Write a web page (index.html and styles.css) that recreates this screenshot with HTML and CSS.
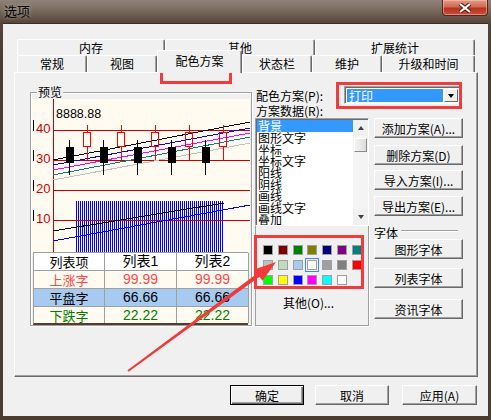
FILE: index.html
```html
<!DOCTYPE html>
<html lang="zh">
<head>
<meta charset="utf-8">
<title>选项</title>
<link rel="stylesheet" href="styles.css">
</head>
<body>
<div class="window">
  <div class="titlebar">
    <span class="title">选项</span>
    <div class="close">
      <svg width="14" height="10" viewBox="0 0 14 10"><path d="M2 1 L12 9 M12 1 L2 9" stroke="#4a1a10" stroke-width="4"/><path d="M2 1 L12 9 M12 1 L2 9" stroke="#fff" stroke-width="2.2"/></svg>
    </div>
  </div>
  <div class="client">
    <div class="tabstrip">
      <div class="tabrow back">
        <div class="tab w148">内存</div>
        <div class="tab w150">其他</div>
        <div class="tab w160">扩展统计</div>
      </div>
      <div class="tabrow front">
        <div class="tab w70">常规</div>
        <div class="tab w70">视图</div>
        <div class="tab w85 sel">配色方案</div>
        <div class="tab w70">状态栏</div>
        <div class="tab w70">维护</div>
        <div class="tab w93">升级和时间</div>
      </div>
    </div>
    <div class="panel">
      <div class="group preview">
        <span class="glabel">预览</span>
        <svg class="chart" width="218" height="153" viewBox="0 0 218 153" shape-rendering="crispEdges">
          <defs>
            <pattern id="vs" width="2" height="10" patternUnits="userSpaceOnUse"><rect width="1" height="10" fill="#0000ff"/></pattern>
          </defs>
          <rect width="218" height="153" fill="#fffbf0"/>
          <rect x="43" y="102" width="149" height="51" fill="url(#vs)"/>
          <g stroke="#c80000" stroke-width="1">
            <line x1="21" y1="31.5" x2="218" y2="31.5"/>
            <line x1="21" y1="61.5" x2="218" y2="61.5"/>
            <line x1="21" y1="91.5" x2="218" y2="91.5"/>
            <line x1="21" y1="121.5" x2="218" y2="121.5"/>
            <line x1="21.5" y1="0" x2="21.5" y2="153"/>
          </g>
          <g stroke="#000" stroke-width="1">
            <line x1="1.5" y1="21" x2="1.5" y2="32"/>
            <line x1="1.5" y1="51" x2="1.5" y2="62"/>
            <line x1="1.5" y1="81" x2="1.5" y2="92"/>
            <line x1="1.5" y1="111" x2="1.5" y2="122"/>
          </g>
          <g class="axis" fill="#d00000">
            <text x="4" y="34">40</text>
            <text x="4" y="64">30</text>
            <text x="4" y="94">20</text>
            <text x="4" y="124">10</text>
          </g>
          <text class="price" x="24" y="19">8888.88</text>
          <g stroke-width="1" fill="none">
            <line x1="21" y1="81" x2="218" y2="44" stroke="#c0c0c0"/>
            <line x1="21" y1="76" x2="218" y2="38" stroke="#008080"/>
            <line x1="21" y1="71" x2="218" y2="34" stroke="#ff00ff"/>
            <line x1="21" y1="66" x2="218" y2="29" stroke="#0000ff"/>
            <line x1="21" y1="61" x2="218" y2="23" stroke="#000"/>
            <line x1="21" y1="142" x2="218" y2="106" stroke="#0000ff"/>
            <line x1="21" y1="132" x2="192" y2="104" stroke="#000"/>
          </g>
          <g fill="#000" stroke="#000">
            <line x1="37.5" y1="41" x2="37.5" y2="76"/><rect x="34" y="48" width="7" height="15"/>
            <line x1="71.5" y1="41" x2="71.5" y2="76"/><rect x="68" y="48" width="7" height="15"/>
            <line x1="105.5" y1="41" x2="105.5" y2="76"/><rect x="102" y="48" width="7" height="15"/>
            <line x1="139.5" y1="41" x2="139.5" y2="76"/><rect x="136" y="48" width="7" height="15"/>
            <line x1="173.5" y1="41" x2="173.5" y2="76"/><rect x="170" y="48" width="7" height="15"/>
          </g>
          <g fill="none" stroke="#ff0000">
            <line x1="55.5" y1="26" x2="55.5" y2="33"/><line x1="55.5" y1="48" x2="55.5" y2="61"/><rect x="51.5" y="33.5" width="7" height="14"/>
            <line x1="89.5" y1="26" x2="89.5" y2="33"/><line x1="89.5" y1="48" x2="89.5" y2="61"/><rect x="85.5" y="33.5" width="7" height="14"/>
            <line x1="123.5" y1="26" x2="123.5" y2="33"/><line x1="123.5" y1="48" x2="123.5" y2="61"/><rect x="119.5" y="33.5" width="7" height="14"/>
            <line x1="157.5" y1="26" x2="157.5" y2="33"/><line x1="157.5" y1="48" x2="157.5" y2="61"/><rect x="153.5" y="33.5" width="7" height="14"/>
            <line x1="191.5" y1="26" x2="191.5" y2="33"/><line x1="191.5" y1="48" x2="191.5" y2="61"/><rect x="187.5" y="33.5" width="7" height="14"/>
          </g>
        </svg>
        <div class="table">
          <div class="cell head">列表项</div><div class="cell head num">列表1</div><div class="cell head num">列表2</div>
          <div class="cell up">上涨字</div><div class="cell up num">99.99</div><div class="cell up num">99.99</div>
          <div class="cell flat">平盘字</div><div class="cell flat num">66.66</div><div class="cell flat num">66.66</div>
          <div class="cell down">下跌字</div><div class="cell down num">22.22</div><div class="cell down num">22.22</div>
        </div>
      </div>
      <div class="right">
        <div class="schemerow">
          <span class="lbl-scheme">配色方案(P):</span>
          <div class="combo">
            <div class="combo-sel">打印</div>
            <div class="combo-btn"><span class="tri"></span></div>
          </div>
        </div>
        <div class="lbl-data">方案数据(R):</div>
        <div class="rgrid">
          <div class="colA">
            <div class="listbox">
              <div class="items">
                <div class="item selitem">背景</div>
                <div class="item">图形文字</div>
                <div class="item">坐标</div>
                <div class="item">坐标文字</div>
                <div class="item">阳线</div>
                <div class="item">阴线</div>
                <div class="item">画线</div>
                <div class="item">画线文字</div>
                <div class="item">叠加</div>
              </div>
              <div class="vscroll">
                <div class="sbtn"><span class="tri-up"></span></div>
                <div class="track"><div class="thumb"></div></div>
                <div class="sbtn"><span class="tri-down"></span></div>
              </div>
            </div>
            <div class="palette">
              <div class="swatches">
                <span class="sw c1"></span><span class="sw c2"></span><span class="sw c3"></span><span class="sw c4"></span><span class="sw c5"></span><span class="sw c6"></span><span class="sw c7"></span>
                <span class="sw c8"></span><span class="sw c9"></span><span class="sw c10"></span><span class="sw c11 focus"></span><span class="sw c12"></span><span class="sw c13"></span><span class="sw c14"></span>
                <span class="sw c15"></span><span class="sw c16"></span><span class="sw c17"></span><span class="sw c18"></span><span class="sw c19"></span><span class="sw c20"></span>
              </div>
              <div class="other">其他(O)...</div>
            </div>
          </div>
          <div class="colB">
            <div class="btn b-add">添加方案(A)...</div>
            <div class="btn b-del">删除方案(D)</div>
            <div class="btn b-imp">导入方案(I)...</div>
            <div class="btn b-exp">导出方案(E)...</div>
            <div class="fontlbl"><span>字体</span><span class="etch"></span></div>
            <div class="btn b-f1">图形字体</div>
            <div class="btn b-f2">列表字体</div>
            <div class="btn b-f3">资讯字体</div>
          </div>
        </div>
      </div>
    </div>
    <div class="dlgbtns">
      <div class="btn dbtn default">确定</div>
      <div class="btn dbtn cancel">取消</div>
      <div class="btn dbtn apply">应用(A)</div>
    </div>
  </div>
  <div class="hl hl-tab"></div>
  <div class="hl hl-combo"></div>
  <div class="hl hl-pal"></div>
  <svg class="arrow" width="491" height="420" viewBox="0 0 491 420">
    <polygon points="276,262 262.5,280.7 259.5,276.7 128.6,371.8 127.4,370.2 257.1,273.4 254.2,269.4" fill="#f03a3a"/>
  </svg>
</div>
</body>
</html>
```

FILE: styles.css
```css
html, body {
  margin: 0;
  padding: 0;
}
body {
  width: 491px;
  height: 420px;
  overflow: hidden;
  font-family: "Noto Sans CJK SC", "Liberation Sans", sans-serif;
  font-size: 12px;
  color: #000;
}
.window {
  position: relative;
  width: 491px;
  height: 420px;
  background: linear-gradient(to bottom, #8f8379 0px, #7a6b5f 10px, #54443a 23px, #4a3c31 60px, #4a3c31 100%);
}
.titlebar {
  height: 23px;
  display: flex;
  align-items: flex-start;
}
.title {
  padding: 3px 0 0 4px;
  font-size: 13px;
  line-height: 16px;
  color: #000;
  text-shadow: 0 0 4px rgba(255,255,255,0.5);
}
.close {
  margin-left: auto;
  margin-right: 3px;
  width: 46px;
  height: 16px;
  box-sizing: border-box;
  border: 1px solid #5a2418;
  border-top: none;
  border-radius: 0 0 4px 4px;
  background: linear-gradient(to bottom, #e29a88 0%, #d06a55 45%, #b8321f 55%, #c9503a 100%);
  box-shadow: inset 0 0 0 1px rgba(255,200,190,0.5);
  display: flex;
  align-items: center;
  justify-content: center;
}
.client {
  margin-left: 3px;
  width: 485px;
  height: 393px;
  box-sizing: border-box;
  background: #f0f0f0;
  border-top: 1px solid #3a2e25;
  padding: 15px 0 0 11px;
}
.tabstrip {
  margin-left: 3px;
  width: 458px;
  height: 33px;
}
.tabrow {
  display: flex;
  align-items: flex-start;
}
.tabrow.back { height: 16px; }
.tabrow.front { height: 17px; }
.tab {
  box-sizing: border-box;
  flex: none;
  background: #f0f0f0;
  border-top: 1px solid #fff;
  border-left: 1px solid #fff;
  border-right: 1px solid #696969;
  box-shadow: inset -1px 0 0 #a0a0a0;
  border-radius: 2px 2px 0 0;
  text-align: center;
  font-size: 12px;
}
.back .tab { height: 16px; line-height: 15px; }
.front .tab { height: 17px; line-height: 16px; }
.front .tab.sel {
  position: relative;
  z-index: 2;
  margin-top: -5px;
  height: 23px;
  line-height: 18px;
  padding-top: 1px;
}
.w70 { width: 70px; }
.w85 { width: 85px; }
.w93 { width: 93px; }
.w148 { width: 148px; }
.w150 { width: 150px; }
.w160 { width: 160px; }

.panel {
  width: 464px;
  height: 305px;
  box-sizing: border-box;
  border-top: 1px solid #fff;
  border-left: 1px solid #fff;
  border-right: 1px solid #696969;
  border-bottom: 1px solid #696969;
  box-shadow: inset -1px -1px 0 #a0a0a0;
  display: flex;
  align-items: flex-start;
}
.group {
  position: relative;
  box-sizing: border-box;
  border: 1px solid #a0a0a0;
  box-shadow: inset 1px 1px 0 #fff, 1px 1px 0 #fff;
}
.preview {
  margin: 19px 0 0 15px;
  width: 222px;
  height: 234px;
  padding: 6px 0 0 1px;
}
.glabel {
  position: absolute;
  left: 6px;
  top: -8px;
  padding: 0 1px;
  background: #f0f0f0;
  line-height: 14px;
  font-size: 12px;
}
.chart {
  display: block;
}
.chart .axis text {
  font-family: "Liberation Sans", sans-serif;
  font-size: 13px;
}
.chart .price {
  font-family: "Liberation Sans", sans-serif;
  font-size: 12.5px;
  fill: #000;
}
.table {
  margin-left: 1px;
  width: 215px;
  display: grid;
  grid-template-columns: 71px 72px 72px;
  grid-template-rows: 18px 18px 18px 16px;
  box-sizing: border-box;
  border-top: 1px solid #a0a0a0;
  border-left: 1px solid #a0a0a0;
  border-bottom: 2px solid #5a3a28;
}
.cell {
  box-sizing: border-box;
  border-right: 1px solid #a0a0a0;
  border-bottom: 1px solid #a0a0a0;
  text-align: center;
  font-size: 13px;
  line-height: 17px;
  background: #fffbf0;
  display: flex;
  align-items: center;
  justify-content: center;
}
.cell.num {
  font-family: "Liberation Sans", "Noto Sans CJK SC", sans-serif;
  font-size: 14px;
}
.cell.head { background: #fff; }
.cell.up { color: #ff4848; }
.cell.flat { background: #a6caf0; color: #000; }
.cell.down { color: #008000; border-bottom: none; }

.right {
  margin: 13px 0 0 3px;
  width: 208px;
}
.schemerow {
  display: flex;
  align-items: center;
  height: 18px;
}
.lbl-scheme {
  width: 88px;
  padding-left: 1px;
  font-size: 12px;
  white-space: nowrap;
}
.combo {
  box-sizing: border-box;
  width: 116px;
  height: 18px;
  background: #fff;
  border: 1px solid;
  border-color: #a0a0a0 #fff #fff #a0a0a0;
  box-shadow: inset 1px 1px 0 #696969;
  display: flex;
  align-items: stretch;
  padding: 2px 1px 1px 2px;
}
.combo-sel {
  flex: 1;
  background: #3399ff;
  color: #fff;
  padding-left: 2px;
  line-height: 13px;
  font-size: 12px;
}
.combo-btn {
  width: 14px;
  box-sizing: border-box;
  margin-left: 1px;
  background: #f0f0f0;
  border: 1px solid;
  border-color: #fff #696969 #696969 #fff;
  display: flex;
  align-items: center;
  justify-content: center;
}
.tri {
  width: 0;
  height: 0;
  border-left: 3.5px solid transparent;
  border-right: 3.5px solid transparent;
  border-top: 4px solid #000;
}
.lbl-data {
  height: 14px;
  line-height: 14px;
  padding-left: 1px;
  font-size: 12px;
}
.rgrid {
  display: grid;
  grid-template-columns: 114px 89px;
  column-gap: 5px;
}
.listbox {
  box-sizing: border-box;
  height: 108px;
  background: #fff;
  border: 1px solid;
  border-color: #a0a0a0 #fff #fff #a0a0a0;
  box-shadow: inset 1px 1px 0 #696969;
  display: flex;
  padding: 1px 0 0 1px;
}
.items {
  flex: 1;
  overflow: hidden;
}
.item {
  height: 11.7px;
  line-height: 12px;
  font-size: 12px;
  padding-left: 1px;
  overflow: hidden;
  white-space: nowrap;
}
.selitem {
  background: #3399ff;
  color: #fff;
  height: 12px;
}
.vscroll {
  width: 15px;
  display: flex;
  flex-direction: column;
}
.sbtn {
  height: 16px;
  box-sizing: border-box;
  background: #f0f0f0;
  display: flex;
  align-items: center;
  justify-content: center;
}
.track {
  flex: 1;
  background: #f4f4f4;
  padding-top: 2px;
}
.thumb {
  height: 14px;
  box-sizing: border-box;
  border: 1px solid;
  border-color: #fff #8a8a8a #8a8a8a #fff;
  margin: 0 1px;
  background: linear-gradient(to right, #f4f4f4, #dcdcdc);
}
.tri-up {
  width: 0; height: 0;
  border-left: 3.5px solid transparent;
  border-right: 3.5px solid transparent;
  border-bottom: 4px solid #404040;
}
.tri-down {
  width: 0; height: 0;
  border-left: 3.5px solid transparent;
  border-right: 3.5px solid transparent;
  border-top: 4px solid #404040;
}
.palette {
  box-sizing: border-box;
  height: 100px;
  border: 1px solid #a0a0a0;
  border-top: none;
  box-shadow: 1px 1px 0 #fff;
  padding: 19px 0 0 7px;
}
.swatches {
  display: grid;
  grid-template-columns: repeat(7, 10px);
  grid-auto-rows: 10px;
  column-gap: 4.8px;
  row-gap: 5px;
}
.sw {
  display: block;
  box-sizing: border-box;
  width: 10px;
  height: 10px;
  border: 1px solid #a0a0a0;
}
.sw.focus {
  outline: 1px solid #3a8ee6;
  outline-offset: 1px;
}
.c1 { background: #000000; }
.c2 { background: #800000; }
.c3 { background: #008000; }
.c4 { background: #808000; }
.c5 { background: #000080; }
.c6 { background: #800080; }
.c7 { background: #008080; }
.c8 { background: #c0c0c0; }
.c9 { background: #c0dcc0; }
.c10 { background: #a6caf0; }
.c11 { background: #fffbf0; }
.c12 { background: #a0a0a4; }
.c13 { background: #808080; }
.c14 { background: #ff0000; }
.c15 { background: #00ff00; }
.c16 { background: #ffff00; }
.c17 { background: #0000ff; }
.c18 { background: #ff00ff; }
.c19 { background: #00ffff; }
.c20 { background: #ffffff; }
.other {
  margin-top: 11px;
  padding-left: 20px;
  font-size: 12px;
  line-height: 14px;
}
.colB {
  display: flex;
  flex-direction: column;
}
.btn {
  box-sizing: border-box;
  height: 20px;
  background: #f0f0f0;
  border: 1px solid;
  border-color: #fff #696969 #696969 #fff;
  box-shadow: inset -1px -1px 0 #a0a0a0;
  display: flex;
  align-items: center;
  justify-content: center;
  font-size: 12px;
  white-space: nowrap;
}
.b-del { margin-top: 7px; }
.b-imp { margin-top: 5px; }
.b-exp { margin-top: 6px; }
.fontlbl {
  margin-top: 9px;
  height: 14px;
  display: flex;
  align-items: center;
  font-size: 12px;
}
.fontlbl .etch {
  flex: 1;
  margin: 0 5px 3px 3px;
  border-top: 1px solid #a0a0a0;
  border-bottom: 1px solid #fff;
}
.b-f1 { margin-top: 0px; }
.b-f2 { margin-top: 9px; }
.b-f3 { margin-top: 11px; }
.dlgbtns {
  margin-top: 8px;
  display: flex;
  justify-content: flex-end;
  width: 463px;
}
.dbtn { width: 74px; }
.cancel { margin-left: 11px; }
.apply { margin-left: 13px; width: 75px; }
.btn.default {
  border: 1px solid #000;
  box-shadow: inset 1px 1px 0 #fff, inset -1px -1px 0 #696969, inset -2px -2px 0 #a0a0a0;
}
.hl {
  position: absolute;
  box-sizing: border-box;
  border: 3px solid #f03c3c;
}
.hl-tab { left: 160px; top: 50px; width: 72px; height: 34px; }
.hl-combo { left: 336px; top: 82px; width: 126px; height: 27px; }
.hl-pal { left: 254px; top: 235px; width: 110px; height: 54px; }
.arrow {
  position: absolute;
  left: 0;
  top: 0;
  pointer-events: none;
}
```
